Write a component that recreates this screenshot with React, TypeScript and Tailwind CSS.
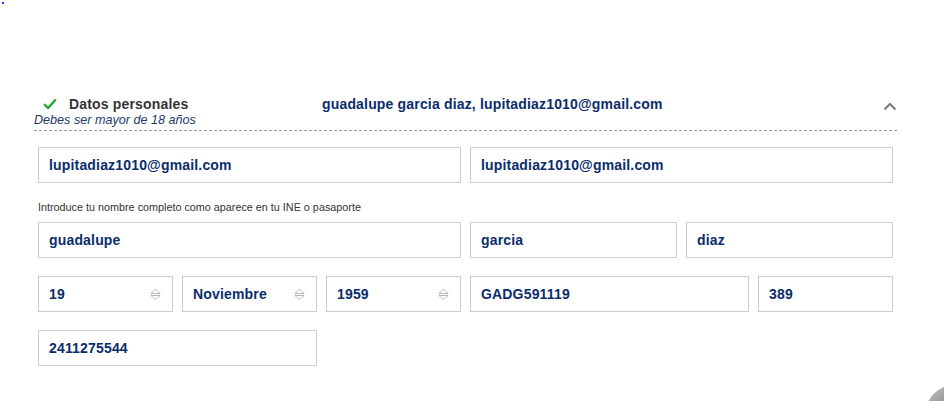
const inputCls =
  "h-9 border border-[#cccccc] bg-white px-[10px] flex items-center text-[14px] font-bold tracking-[0.17px] text-[#0b2d6b]";

function Field({ value, span }: { value: string; span: string }) {
  return (
    <div className={`${inputCls} ${span}`}>
      <span>{value}</span>
    </div>
  );
}

function SelectField({ value, span }: { value: string; span: string }) {
  return (
    <div className={`${inputCls} ${span} justify-between`}>
      <span>{value}</span>
      <svg className="mr-px mt-px" width="11" height="13" viewBox="0 0 11 13" fill="none" stroke="#b8b8b8" strokeWidth="1">
        <path d="M1 5.5 L5.5 1 L10 5.5 Z" />
        <path d="M1 7.5 L5.5 12 L10 7.5 Z" />
      </svg>
    </div>
  );
}

export default function App() {
  return (
    <div className="relative h-[401px] w-[944px] overflow-hidden bg-white font-['Liberation_Sans',Arial,sans-serif]">
      {/* stray pixel top-left */}
      <div className="absolute left-[2px] top-[2px] h-[2px] w-[2px] bg-[#2a3cff]" />

      {/* ================= HEADER ================= */}
      <div className="ml-[34px] mt-[95px] w-[863px] border-b border-dashed border-[#9a9a9a] pb-[3px]">
        <div className="flex items-center h-[18px]">
          <div className="flex w-[288px] items-center">
            <svg className="ml-[9px]" width="14" height="12" viewBox="0 0 14 12" fill="none">
              <path d="M1.2 6.2 L5 10 L12.8 1.5" stroke="#22a830" strokeWidth="2.4" />
            </svg>
            <span className="ml-[12px] text-[14px] font-bold tracking-[0.17px] text-[#333333]">Datos personales</span>
          </div>
          <span className="text-[14px] font-bold tracking-[0.17px] text-[#0b2d6b]">
            guadalupe garcia diaz, lupitadiaz1010@gmail.com
          </span>
          <svg className="ml-auto mt-[5px]" width="14" height="9" viewBox="0 0 14 9" fill="none">
            <path d="M1.5 7.5 L7 2 L12.5 7.5" stroke="#7a7a7a" strokeWidth="2" />
          </svg>
        </div>
        <div className="text-[12.6px] italic leading-[14px] text-[#1b3a6b]">Debes ser mayor de 18 años</div>
      </div>

      {/* ================= FORM ================= */}
      <div className="ml-[38px] w-[855px] pt-[16px]">
        <div className="grid grid-cols-12 gap-x-[9px]">
          <Field value="lupitadiaz1010@gmail.com" span="col-span-6" />
          <Field value="lupitadiaz1010@gmail.com" span="col-span-6" />
        </div>

        <p className="mt-[18px] h-[21px] text-[10.8px] leading-[13px] text-[#333333]">
          Introduce tu nombre completo como aparece en tu INE o pasaporte
        </p>

        <div className="grid grid-cols-12 gap-x-[9px]">
          <Field value="guadalupe" span="col-span-6" />
          <Field value="garcia" span="col-span-3" />
          <Field value="diaz" span="col-span-3" />
        </div>

        <div className="mt-[18px] grid grid-cols-12 gap-x-[9px]">
          <SelectField value="19" span="col-span-2" />
          <SelectField value="Noviembre" span="col-span-2" />
          <SelectField value="1959" span="col-span-2" />
          <Field value="GADG591119" span="col-span-4" />
          <Field value="389" span="col-span-2" />
        </div>

        <div className="mt-[18px] grid grid-cols-12 gap-x-[9px]">
          <Field value="2411275544" span="col-span-4" />
        </div>
      </div>

      {/* corner widget */}
      <div className="absolute left-[925px] top-[385px] h-[60px] w-[60px] rounded-full bg-gradient-to-br from-[#c8c8c8] via-[#7a7a7a] to-[#4a4a4a]" />
    </div>
  );
}
